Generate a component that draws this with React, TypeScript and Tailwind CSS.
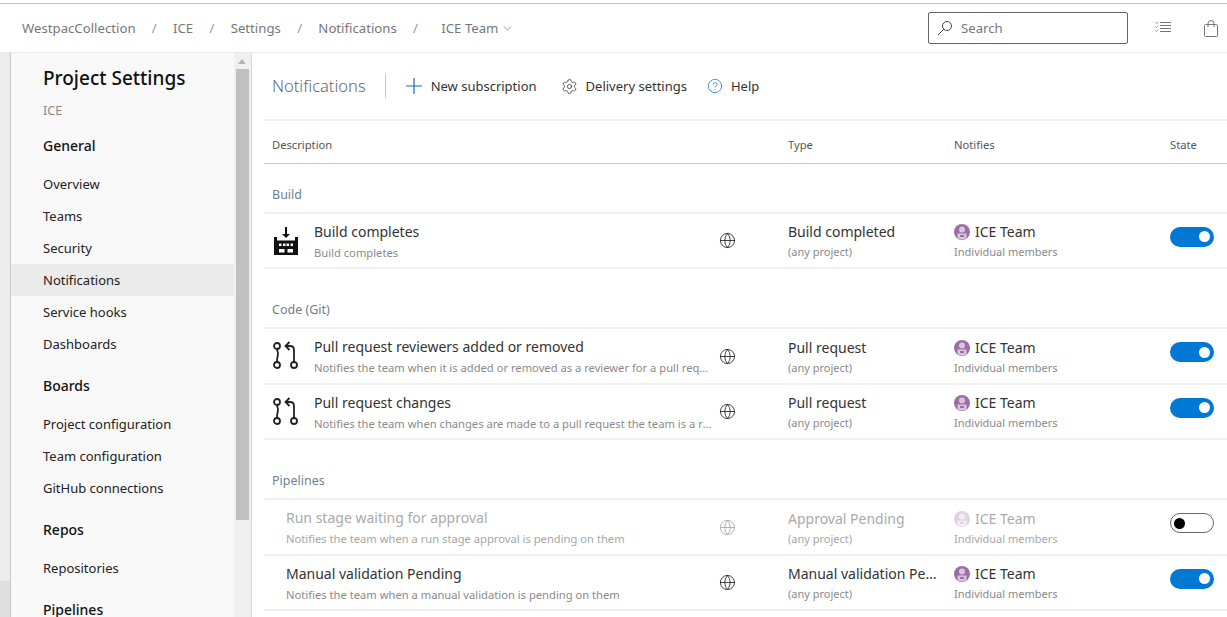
import React from 'react';
import { ChevronDown, Settings, CircleHelp, Globe } from 'lucide-react';

const font = "font-['Noto_Sans','Open_Sans',sans-serif]";

const BuildIcon = () => (
  <svg width="24" height="28" viewBox="0 0 24 28" fill="#111" className="ml-[2px]">
    <path d="M11 0h2v7h3l-4 4-4-4h3z" />
    <path d="M0 10h3v3.500h18V10h3v18H0z" />
    <path d="M5 16.500h2.500v2.500H5zM9 16.500h2.500v2.500H9zM12.500 16.500H15v2.500h-2.500zM16.500 16.500H19v2.500h-2.500z" fill="#fff" />
    <path d="M5 22h5.500v3.500H5zM13.500 22H19v3.500h-5.500z" fill="#fff" />
  </svg>
);

const PullRequestIcon = () => (
  <svg width="28" height="30" viewBox="0 0 28 30" fill="none" stroke="#222" strokeWidth="1.800">
    <circle cx="5" cy="5" r="3" />
    <circle cx="5" cy="24" r="3" />
    <circle cx="22" cy="24" r="3" />
    <path d="M5 8c0 2 1 2.500 1 4.500S5 16 5 21" />
    <path d="M22 21v-12c0-2.500-1.500-4-4-4h-4.500" />
    <path d="M17.500 1l-4 4 4 4" />
  </svg>
);

const Avatar = () => (
  <svg width="16" height="16" viewBox="0 0 16 16">
    <circle cx="8" cy="8" r="8" fill="#9a6fa6" />
    <circle cx="8" cy="5.500" r="3" fill="#d9c4de" />
    <path d="M3.500 14V9.500h9V14a8 8 0 0 1-9 0z" fill="#d9c4de" />
    <path d="M6 11h4v2H6z" fill="#9a6fa6" />
  </svg>
);

const Toggle = ({ on }: { on: boolean }) =>
  on ? (
    <div className="w-11 h-5 rounded-full bg-[#0078d4] flex items-center justify-end pr-[4px]">
      <div className="w-[11px] h-[11px] rounded-full bg-white" />
    </div>
  ) : (
    <div className="w-11 h-5 rounded-full bg-white border border-[#666] flex items-center pl-[3px]">
      <div className="w-[11px] h-[11px] rounded-full bg-black" />
    </div>
  );

interface Sub {
  title: string;
  desc: string;
  type: string;
  icon?: 'build' | 'pr';
  off?: boolean;
  h: string;
}

const Row = ({ title, desc, type, icon, off, h }: Sub) => {
  const main = off ? 'text-[#aaa]' : 'text-[#333]';
  const sub = off ? 'text-[#a6a6a6]' : 'text-[#8a8a8a]';
  return (
    <div className={`flex items-center ${h} border-b-2 border-[#f0f0f0]`}>
      <div className="flex items-center w-[524px]">
        <div className={`flex items-center w-[450px] ${icon ? 'pl-[8px]' : 'pl-[22px]'}`}>
          {icon && (
            <div className="w-[42px] shrink-0">
              {icon === 'build' ? <BuildIcon /> : <PullRequestIcon />}
            </div>
          )}
          <div className="flex-1 min-w-0 pt-[4px]">
            <div className={`text-[14px] leading-[20px] whitespace-nowrap ${main}`}>{title}</div>
            <div className={`text-[11.200px] leading-[22px] whitespace-nowrap overflow-hidden text-ellipsis ${sub}`}>{desc}</div>
          </div>
        </div>
        <div className={`ml-[5px] ${off ? 'opacity-40' : ''}`}>
          <Globe size={17} strokeWidth={1.200} color="#222" />
        </div>
      </div>
      <div className="w-[166px] pt-[3px]">
        <div className={`text-[14px] leading-[20px] w-[150px] whitespace-nowrap overflow-hidden text-ellipsis ${main}`}>{type}</div>
        <div className={`text-[11px] leading-[20px] ${sub}`}>(any project)</div>
      </div>
      <div className="w-[216px] pt-[3px]">
        <div className={`flex items-center gap-[5px] text-[14px] leading-[20px] ${main}`}>
          <div className={off ? 'opacity-30' : ''}>
            <Avatar />
          </div>
          ICE Team
        </div>
        <div className={`text-[11px] leading-[20px] ${sub}`}>Individual members</div>
      </div>
      <div className="mb-[8px]">
        <Toggle on={!off} />
      </div>
    </div>
  );
};

const Group = ({ label, className }: { label: string; className: string }) => (
  <div className={`flex items-center pl-[8px] text-[12.500px] text-[#6f7f8f] border-b-2 border-[#f0f0f0] ${className}`}>
    {label}
  </div>
);

const navGroups = [
  { title: 'General', h: 'h-[46px]', items: ['Overview', 'Teams', 'Security', 'Notifications', 'Service hooks', 'Dashboards'] },
  { title: 'Boards', h: 'h-[48px] pt-[2px]', items: ['Project configuration', 'Team configuration', 'GitHub connections'] },
  { title: 'Repos', h: 'h-[48px] pt-[2px]', items: ['Repositories'] },
  { title: 'Pipelines', h: 'h-[48px] pt-[2px]', items: [] as string[] },
];

const crumbs = ['WestpacCollection', 'ICE', 'Settings', 'Notifications'];

export default function App() {
  return (
    <div className={`h-[617px] w-[1227px] overflow-hidden bg-white flex flex-col ${font}`}>
      <div className="h-[4px] shrink-0 bg-white border-b border-[#c4c4c4]" />
      <header className="h-[49px] shrink-0 flex items-center border-b border-[#eaeaea] pl-[22px] pr-[9px] text-[13.200px] text-[#777]">
        {crumbs.map((c) => (
          <React.Fragment key={c}>
            <span className="pt-[2px]">{c}</span>
            <span className="mx-[16.300px] pt-[2px] text-[#999]">/</span>
          </React.Fragment>
        ))}
        <span className="ml-[7px] pt-[1px]">ICE Team</span>
        <ChevronDown size={13} color="#bbb" className="ml-[3px]" />
        <div className="ml-auto mr-[27px] w-[200px] h-[32px] border border-[#666] rounded-[2px] flex items-center pl-[8px] gap-[8px]">
          <svg width="16" height="16" viewBox="0 0 16 16" fill="none" stroke="#444" strokeWidth="1">
            <circle cx="10" cy="6" r="4.500" />
            <path d="M6.800 9.200 1 15" />
          </svg>
          <span className="text-[#777] pt-[2px]">Search</span>
        </div>
        <svg width="16" height="14" viewBox="0 0 16 14" fill="none" stroke="#777" strokeWidth="1" className="mr-[33px]">
          <path d="M5 1.500h11M5 4.500h11M5 7.500h11M5 10.500h11" />
          <path d="M0.500 1.500l1 1 1.500-2M0.500 5.500l1 1 1.500-2M0.500 9.500l1 1 1.500-2" stroke="#999" />
        </svg>
        <svg width="14" height="17" viewBox="0 0 14 17" fill="none" stroke="#777" strokeWidth="1">
          <rect x="0.500" y="4.500" width="13" height="12" rx="1" />
          <path d="M4 7V3.500a3 3 0 0 1 6 0V7" />
        </svg>
      </header>

      <div className="flex flex-1 min-h-0">
        <div className="w-[11px] shrink-0 flex flex-col border-r border-[#c8c8c8] bg-[#ececec]">
          <div className="flex-1" />
          <div className="h-[36px] bg-[#dedede]" />
        </div>

        <nav className="w-[223px] shrink-0 bg-[#f8f8f8] overflow-hidden">
          <h1 className="pl-[32px] mt-[9px] h-[32px] text-[19px] leading-[32px] font-medium text-[#111]">Project Settings</h1>
          <div className="pl-[32px] mt-[6px] h-[22px] text-[12.500px] leading-[22px] text-[#888]">ICE</div>
          {navGroups.map((g) => (
            <div key={g.title}>
              <div className={`pl-[32px] flex items-center text-[14px] font-medium text-[#111] ${g.h}`}>{g.title}</div>
              {g.items.map((item) => (
                <div
                  key={item}
                  className={`pl-[32px] pt-[2px] h-[32px] flex items-center text-[13px] text-[#222] ${item === 'Notifications' ? 'bg-[#ebebeb]' : ''}`}
                >
                  {item}
                </div>
              ))}
            </div>
          ))}
        </nav>

        <div className="w-[18px] shrink-0 bg-[#f0f0f0] border-r border-[#d8d8d8] flex flex-col items-center pr-[1px]">
          <div className="h-[16px] flex items-center justify-center">
            <div className="w-0 h-0 border-x-[4px] border-x-transparent border-b-[5px] border-b-[#b5b5b5]" />
          </div>
          <div className="w-[13px] h-[451px] bg-[#c0c0c0]" />
        </div>

        <main className="flex-1 min-w-0 pl-[12px]">
          <div className="h-[68px] flex items-center border-b-2 border-[#f0f0f0] pl-[8px] text-[13px] text-[#333]">
            <span className="text-[16.500px] text-[#5c6b7a] font-light">Notifications</span>
            <div className="w-px h-[24px] bg-[#c8c8c8] mx-[19px]" />
            <svg width="16" height="16" viewBox="0 0 16 16" fill="none" stroke="#0f6cbd" strokeWidth="1.200" className="ml-[1px] mr-[9px]">
              <path d="M8 0v16M0 8h16" />
            </svg>
            <span className="pt-[1px]">New subscription</span>
            <Settings size={17} strokeWidth={1.100} color="#333" className="ml-[24px] mr-[8px]" />
            <span className="pt-[1px]">Delivery settings</span>
            <CircleHelp size={16} strokeWidth={1.100} color="#0f6cbd" className="ml-[20px] mr-[8px]" />
            <span className="pt-[1px]">Help</span>
          </div>
          <div className="h-[43px] flex items-center border-b border-[#c8c8c8] pl-[8px] pt-[6px] text-[11.200px] text-[#555]">
            <div className="w-[516px]">Description</div>
            <div className="w-[166px]">Type</div>
            <div className="w-[216px]">Notifies</div>
            <div>State</div>
          </div>
          <Group label="Build" className="h-[50px] pt-[15px]" />
          <Row h="h-[55px]" icon="build" title="Build completes" desc="Build completes" type="Build completed" />
          <Group label="Code (Git)" className="h-[60px] pt-[25px]" />
          <Row h="h-[56px]" icon="pr" title="Pull request reviewers added or removed" desc="Notifies the team when it is added or removed as a reviewer for a pull request" type="Pull request" />
          <Row h="h-[55px]" icon="pr" title="Pull request changes" desc="Notifies the team when changes are made to a pull request the team is a reviewer on" type="Pull request" />
          <Group label="Pipelines" className="h-[60px] pt-[25px]" />
          <Row h="h-[56px]" off title="Run stage waiting for approval" desc="Notifies the team when a run stage approval is pending on them" type="Approval Pending" />
          <Row h="h-[55px]" title="Manual validation Pending" desc="Notifies the team when a manual validation is pending on them" type="Manual validation Pending" />
        </main>
      </div>
    </div>
  );
}
